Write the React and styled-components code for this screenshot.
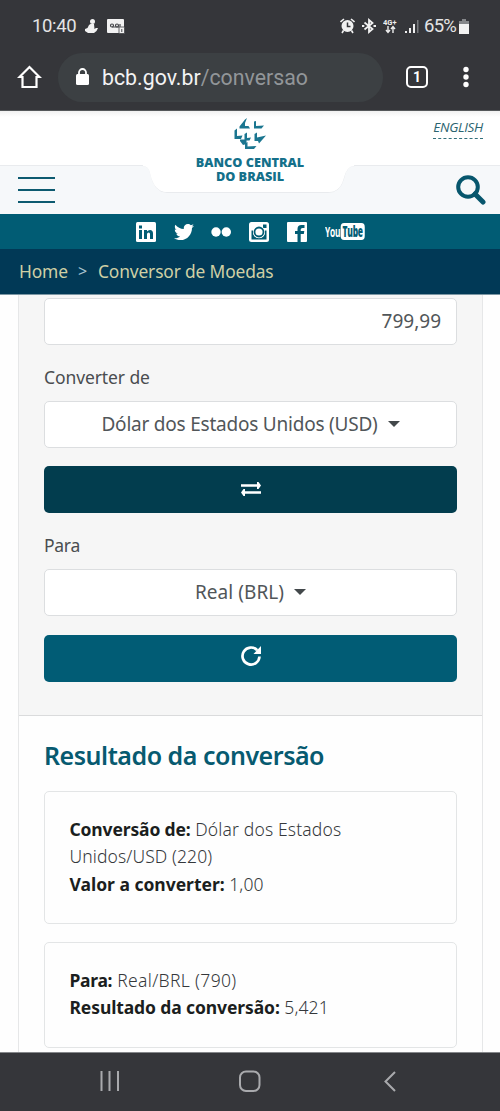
import React from "react";
import styled, { createGlobalStyle } from "styled-components";
import { FaTwitter } from "react-icons/fa";

const Global = createGlobalStyle`
  *{box-sizing:border-box}
  body{margin:0;background:#fff;font-family:"Noto Sans",sans-serif;overflow:hidden}
  svg{display:block;flex:none}
`;

const Screen = styled.div`
  width: 500px; height: 1111px; display: flex; flex-direction: column; overflow: hidden; background: #fefefe;
`;
const Chrome = styled.header`
  height: 111px; background: #35363a; color: #eee; font-family: Roboto, sans-serif; border-bottom: 1px solid #55585a; flex: none;
`;
const StatusBar = styled.div`
  height: 52px; padding: 0 31px 0 32px; display: flex; align-items: center; justify-content: space-between;
`;
const Group = styled.div`
  display: flex; align-items: center; gap: ${(p) => p.$gap || 0}px;
`;
const StatusText = styled.span`
  font-size: 18.5px; line-height: 24px; color: #e4e4e5; letter-spacing: ${(p) => p.$ls || 0}px;
`;
const UrlRow = styled.div`
  height: 50px; display: flex; align-items: center; padding-left: 17px;
`;
const UrlPill = styled.div`
  width: 325px; height: 49px; margin-left: 16px; border-radius: 25px; background: #3c4043; display: flex; align-items: center; padding-left: 18px; gap: 13px;
  font-size: 21.3px; color: #929699;
  b { font-weight: 400; color: #f3f3f4; }
`;
const TabCount = styled.div`
  width: 22px; height: 22px; margin-left: 23px; border: 2px solid #fff; border-radius: 5px; font-size: 14px; font-weight: 700; line-height: 18px; text-align: center; color: #fff;
`;
const MoreIcon = styled.svg`
  margin-left: 35px;
`;
const Masthead = styled.div`
  height: 54px; flex: none; background: linear-gradient(#f1f1f1, #fff 6px); position: relative;
`;
const NotchLayer = styled.div`
  position: absolute; left: 0; top: 0; z-index: 1;
`;
const Brand = styled.div`
  position: absolute; z-index: 2; top: 6px; left: 0; width: 500px; display: flex; flex-direction: column; align-items: center;
`;
const BrandName = styled.div`
  font: 800 12.7px/13px "Open Sans", sans-serif; letter-spacing: ${(p) => p.$ls}px; color: #14708a; text-align: center; margin-top: ${(p) => p.$mt || 0}px; height: 13px;
`;
const Language = styled.a`
  position: absolute; z-index: 3; right: 17px; top: 7px; font: italic 400 13.5px/18px "Open Sans", sans-serif; letter-spacing: -0.3px; color: #2b6470; border-bottom: 1px dashed #33707c; padding-bottom: 2px;
`;
const NavStrip = styled.nav`
  height: 49px; flex: none; display: flex; justify-content: space-between; align-items: center; padding: 2px 14px 0 18px; border-bottom: 1px solid #ded9b4;
  & > svg { position: relative; z-index: 2; }
`;
const Social = styled.div`
  height: 35px; flex: none; background: #015c74; display: flex; align-items: center; padding-left: 136px; color: #fff;
`;
const SocialItem = styled.span`
  width: 37.7px; flex: none; display: flex;
`;
const YouTube = styled.span`
  display: flex; align-items: center; font: 700 15px/17px "Open Sans", sans-serif; transform: scaleX(0.56); transform-origin: 0 50%; letter-spacing: -0.4px; margin-left: 1px;
  b { background: #fff; color: #015c74; border-radius: 6px/4px; padding: 0 3px; margin-left: 1px; }
`;
const Crumbs = styled.div`
  height: 46px; flex: none; background: #013956; color: #cfd0a5; display: flex; align-items: center; padding: 0 0 1px 19px; letter-spacing: ${(p) => p.$ls}px; border-bottom: 1px solid #7c97a4;
`;
const Crumb = styled.span`
  width: ${(p) => p.$w}px; white-space: nowrap; color: ${(p) => p.$c || "inherit"}; font-size: ${(p) => p.$size || 17.4}px;
`;
const Page = styled.main`
  height: 757px; flex: none; margin: 0 17px 0 18px; border: solid #e6e7e8; border-width: 0 1px; overflow: hidden; background: #fefefe;
`;
const Form = styled.section`
  height: 421px; background: #f6f6f6; border-bottom: 1px solid #dadbdc; padding: 3px 25px 0; display: flex; flex-direction: column;
`;
const Field = styled.div`
  height: 47px; flex: none; border: 1px solid #dcdee0; border-radius: 5px; background: #fff; display: flex; align-items: center; justify-content: ${(p) => (p.$end ? "flex-end" : "center")};
  padding: 0 ${(p) => (p.$end ? 15 : 0)}px 1px 0; gap: 10px; color: #515659; font-size: 19px; letter-spacing: ${(p) => p.$ls || 0}px;
`;
const Caret = styled.i`
  border: solid transparent; border-width: 6px 6px 0; border-top-color: #43484b; margin-top: -1px;
`;
const Label = styled.label`
  height: ${(p) => p.$h}px; padding-top: ${(p) => p.$top}px; font-size: 17.5px; line-height: 26px; color: #4a4d50; letter-spacing: ${(p) => p.$ls}px;
`;
const Button = styled.button`
  height: 47px; flex: none; margin: ${(p) => p.$mt}px 0 0; padding: 0 0 ${(p) => p.$pb || 0}px; border: 0; border-radius: 5px; background: ${(p) => p.$bg}; color: #fff; display: flex; align-items: center; justify-content: center;
`;
const Results = styled.section`
  padding: 0 25px;
`;
const Title = styled.h2`
  margin: 0; height: 75px; padding-top: 21px; font: 600 25px/36px "Noto Sans", sans-serif; letter-spacing: ${(p) => p.$ls}px; color: #075a70; white-space: nowrap;
`;
const Card = styled.article`
  height: ${(p) => p.$h}px; margin-bottom: 18px; border: 1px solid #e3e5e6; border-radius: 5px; padding: 24px 24.5px 0; font-size: 17.5px; line-height: 27.3px; color: #35383b;
`;
const Line = styled.div`
  white-space: nowrap; font-weight: 300; letter-spacing: ${(p) => p.$ls}px;
  b { font-weight: 700; color: #1b1e20; letter-spacing: ${(p) => p.$bls}px; }
`;
const SystemNav = styled.footer`
  height: 59px; flex: none; background: #35363a; border-top: 1px solid #85878a;
`;

const Notch = () => (
  <svg width="500" height="103" viewBox="0 0 500 103">
    <path d="M-2 54.500H142Q149 54.500 150.500 62Q154 81.500 167 81.500H328Q340 81.500 343.500 68Q346 54.500 355 54.500H502V105H-2Z" fill="#f6f8fa" stroke="#e9ebee" />
    <path d="M143 53H354V55Q346.500 55 343.500 68Q340 81 328 81H167Q154 81 150 62Q148.500 55 143 55Z" fill="#fff" />
  </svg>
);
const Logo = () => (
  <svg width="34" height="34" viewBox="0 0 34 34" fill="#1b7690">
    <path d="M14 1 12 2.500 6.500 9.500V11.500H17L15.500 9H12V6Z" />
    <path d="M21 4.500 23 4V9L31 8.500 28.500 11.500H21Z" />
    <path d="M1.500 13.500 4 11.500V19L9.500 18.500 8 22H1.500Z" />
    <path d="M11.500 17 14 15.500V21L18 20.500 16.500 23.500H13.500V27L10 28 7 24V22.500H11.500Z" />
    <path d="M21.500 17 24 15.500V20.500L33 18.500 26 26.500 25 24H21.500Z" />
    <path d="M12 26.500 14.500 25V29.500L23.500 29 21 32H12Z" />
  </svg>
);

export default function App() {
  return (
    <Screen>
      <Global />
      <Chrome>
        <StatusBar>
          <Group $gap={9}>
            <StatusText $ls={-0.35}>10:40</StatusText>
            <svg width="13" height="16" viewBox="0 0 13 16" fill="#f2f2f2"><circle cx="7.500" cy="3.500" r="2.500" /><path d="M5.500 6H9L9.500 11 11 10H13L11.500 13 9 15H3L0 13V11L2.500 10 4 7Z" /></svg>
            <svg width="18" height="16" viewBox="0 0 18 16"><rect y="1" width="17" height="14" rx="1" fill="#f2f2f2" /><g fill="none" stroke="#45464a" strokeWidth="1.200"><circle cx="5" cy="7.500" r="1.500" /><circle cx="10" cy="7.500" r="1.500" /><path d="M5 9H14M13 6V8" /></g><rect x="12" y="9" width="5.500" height="6.500" fill="#f2f2f2" stroke="#45464a" strokeWidth=".8" /><path d="M14.800 11V14" stroke="#45464a" /></svg>
          </Group>
          <Group $gap={7}>
            <svg width="15" height="16" viewBox="0 0 15 16"><circle cx="7.500" cy="8" r="6" fill="#f1f1f1" /><path d="M.5 4 4 1M11 1 14.500 4M3.500 12.500 2 15M11.500 12.500 13 15" stroke="#f1f1f1" strokeWidth="1.600" /><path d="M7.500 4.500V8.500H10.500" stroke="#35363a" fill="none" strokeWidth="1.500" /></svg>
            <svg width="14" height="16" viewBox="0 0 14 16" fill="none" stroke="#f1f1f1" strokeWidth="1.800"><path d="M2.500 4.500 10.500 11 7 14V2L10.500 5 2.500 11.500M0 8H2.300M11.500 8H14" /></svg>
            <svg width="15" height="16" viewBox="0 0 15 16"><text x="0" y="6.500" fontSize="7.500" fontWeight="700" fill="#eee" fontFamily="Roboto">4G+</text><path d="M5 8V14M3 12 5 14.500 7 12M10 15V9M8 11 10 8.500 12 11" stroke="#eee" fill="none" strokeWidth="1.400" /></svg>
            <Group $gap={5}>
              <svg width="14" height="15" viewBox="0 0 14 15" fill="#eee"><path d="M0 12H2V14H0ZM4 9H6V14H4ZM8 5H10V14H8Z" /><path d="M12 1H13.500V14H12Z" fill="#77797c" /></svg>
              <Group $gap={3}>
                <StatusText $ls={-0.8}>65%</StatusText>
                <svg width="10" height="15" viewBox="0 0 10 15"><path d="M3 0H7V2H10V5H0V2H3Z" fill="#85878a" /><path d="M0 5H10V15H0Z" fill="#f2f2f2" /></svg>
              </Group>
            </Group>
          </Group>
        </StatusBar>
        <UrlRow>
          <svg width="25" height="24" viewBox="0 0 25 24" fill="none" stroke="#fff" strokeWidth="2.200"><path d="M2.500 12 12.500 2 22.500 12H19.500V22H5.500V12Z" /></svg>
          <UrlPill>
            <svg width="13" height="18" viewBox="0 0 13 18"><rect y="6" width="13" height="11" rx="1.500" fill="#fff" /><path d="M3 7V4.500A3.500 3.500 0 0 1 10 4.500V7" fill="none" stroke="#fff" strokeWidth="1.800" /></svg>
            <span><b>bcb.gov.br</b>/conversao</span>
          </UrlPill>
          <TabCount>1</TabCount>
          <MoreIcon width="6" height="22" viewBox="0 0 6 22" fill="#fff"><circle cx="3" cy="3.500" r="2.700" /><circle cx="3" cy="11" r="2.700" /><circle cx="3" cy="18.500" r="2.700" /></MoreIcon>
        </UrlRow>
      </Chrome>
      <Masthead>
        <NotchLayer><Notch /></NotchLayer>
        <Brand>
          <Logo />
          <BrandName $ls={0} $mt={5}>BANCO CENTRAL</BrandName>
          <BrandName $ls={0} $mt={1}>DO BRASIL</BrandName>
        </Brand>
        <Language>ENGLISH</Language>
      </Masthead>
      <NavStrip>
        <svg width="37" height="28" viewBox="0 0 37 28" stroke="#0d5a70" strokeWidth="2.200"><path d="M0 2H37M0 14H37M0 26H37" /></svg>
        <svg width="30" height="30" viewBox="0 0 30 30" fill="none" stroke="#07566d" strokeWidth="4"><circle cx="12" cy="12" r="9.800" /><path d="M19 19 27 27" strokeWidth="5" strokeLinecap="round" /></svg>
      </NavStrip>
      <Social>
        <SocialItem><svg width="20" height="20" viewBox="0 0 20 20"><rect width="20" height="20" rx="1.500" fill="#fff" /><path d="M3 8H6V17H3ZM3 3.500H6V6.500H3ZM8 8H11V9.500Q12 8 14 8 17 8 17 11.500V17H14V12Q14 10.500 12.700 10.500 11 10.500 11 12.300V17H8Z" fill="#015c74" /></svg></SocialItem>
        <SocialItem><FaTwitter size={20} /></SocialItem>
        <SocialItem><svg width="20" height="20" viewBox="0 0 20 20" fill="#fff"><circle cx="5" cy="10" r="4.700" /><circle cx="15.300" cy="10" r="4.700" /></svg></SocialItem>
        <SocialItem><svg width="20" height="20" viewBox="0 0 20 20"><rect width="20" height="20" rx="2.500" fill="#fff" /><path d="M2.500 8.500H4.300A6 6 0 1 0 15.700 8.500H17.500V17.500H2.500ZM14 2.500H17.500V6H14Z" fill="#015c74" /><circle cx="10" cy="10" r="6" fill="#fff" /><circle cx="10" cy="10" r="4.500" fill="none" stroke="#015c74" strokeWidth="1.800" /></svg></SocialItem>
        <SocialItem><svg width="20" height="20" viewBox="0 0 20 20"><rect width="20" height="20" rx="1" fill="#fff" /><path d="M10.500 20V12H8V9H10.500V7Q10.500 3 14.500 3H17.500V6H15.500Q13.700 6 13.700 7.500V9H17.300L16.800 12H13.700V20Z" fill="#015c74" /></svg></SocialItem>
        <YouTube>You<b>Tube</b></YouTube>
      </Social>
      <Crumbs $ls={-0.16}>
        <Crumb $w={59}>Home</Crumb><Crumb $w={20} $c="#a9c3cf" $size={16}>&gt;</Crumb><Crumb $w={200}>Conversor de Moedas</Crumb>
      </Crumbs>
      <Page>
        <Form>
          <Field $end>799,99</Field>
          <Label $h={56} $top={19} $ls={-0.1}>Converter de</Label>
          <Field $ls={-0.22}>Dólar dos Estados Unidos (USD)<Caret /></Field>
          <Button $mt={18} $pb={1} $bg="#023d4e"><svg width="20" height="14" viewBox="0 0 20 14" fill="#fff"><path d="M0 2.200H16V0H17.500L20 3.500 17.500 7H16V4.800H0ZM20 9.200H4V7H2.500L0 10.500 2.500 14H4V11.800H20Z" /></svg></Button>
          <Label $h={56} $top={19} $ls={-0.3}>Para</Label>
          <Field $ls={0.05}>Real (BRL)<Caret /></Field>
          <Button $mt={18.5} $pb={4} $bg="#015c75"><svg width="20" height="20" viewBox="0 0 20 20"><path d="M16.200 4.200A8.500 8.500 0 1 0 18.500 10.500" fill="none" stroke="#fff" strokeWidth="2.700" /><path d="M20 0V8H12.500Z" fill="#fff" /></svg></Button>
        </Form>
        <Results>
          <Title $ls={-0.48}>Resultado da conversão</Title>
          <Card $h={133}>
            <Line $ls={0.15} $bls={-0.15}><b>Conversão de:</b> Dólar dos Estados</Line>
            <Line $ls={0.1}>Unidos/USD (220)</Line>
            <Line $ls={0.1} $bls={-0.02}><b>Valor a converter:</b> 1,00</Line>
          </Card>
          <Card $h={106}>
            <Line $ls={0.35} $bls={-0.3}><b>Para:</b> Real/BRL (790)</Line>
            <Line $ls={0.1} $bls={-0.11}><b>Resultado da conversão:</b> 5,421</Line>
          </Card>
        </Results>
      </Page>
      <SystemNav>
        <svg width="500" height="58" viewBox="0 0 500 58" fill="none" stroke="#a9aaad" strokeWidth="2"><path d="M101.500 18V38M109.500 18V38M118 18V38" /><rect x="240" y="18.500" width="19.500" height="19.500" rx="6" /><path d="M395 19 385.500 28.500 395 38" /></svg>
      </SystemNav>
    </Screen>
  );
}
